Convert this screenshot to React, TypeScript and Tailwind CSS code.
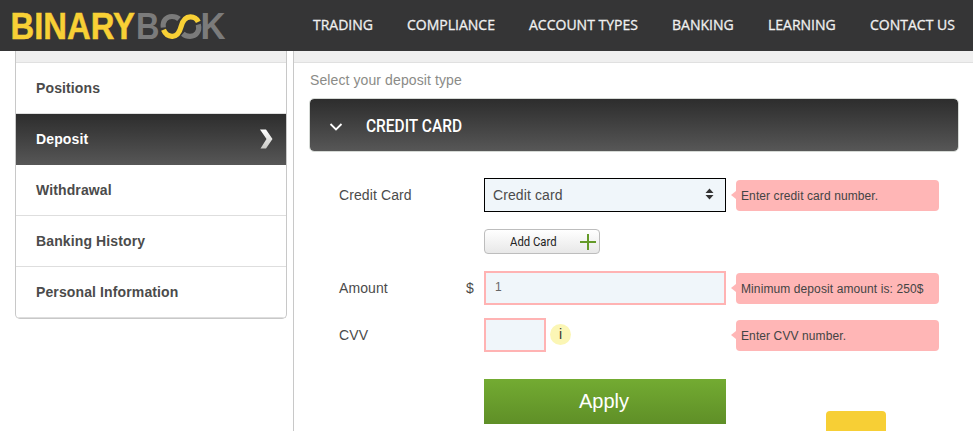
import React, { useState } from "react";
import clsx from "clsx";

type FieldRowProps = {
  label: string;
  prefix?: string;
  error?: string;
  children: React.ReactNode;
};

const navItems = [
  { label: "TRADING", width: "w-[60px]" },
  { label: "COMPLIANCE", width: "w-[88px]" },
  { label: "ACCOUNT TYPES", width: "w-[109px]" },
  { label: "BANKING", width: "w-[62px]" },
  { label: "LEARNING", width: "w-[68px]" },
  { label: "CONTACT US", width: "w-[86px]" },
];

const menuItems = [
  "Positions",
  "Deposit",
  "Withdrawal",
  "Banking History",
  "Personal Information",
];

const Logo: React.FC = () => (
  <svg
    width="227"
    height="51"
    viewBox="0 0 227 51"
    className="block overflow-visible"
    fontFamily="'Liberation Sans', sans-serif"
    fontWeight="bold"
    fontSize="36"
  >
    <text x="10.500" y="38.800" fill="#f8d035" stroke="#f8d035" strokeWidth="0.5" textLength="124.500" lengthAdjust="spacingAndGlyphs">
      BINARY
    </text>
    <text x="136" y="38.800" fill="#7b7b7b" textLength="23.500" lengthAdjust="spacingAndGlyphs">
      B
    </text>
    <text x="200.500" y="38.800" fill="#7b7b7b" textLength="25" lengthAdjust="spacingAndGlyphs">
      K
    </text>
    {/* Two interlocked rings that stand for the double O */}
    <g fill="none" strokeWidth="5.2">
      <path d="M163.300 27.500C162.300 20.500 166.500 16.500 172 16.500c3 0 5.200.8 7 2.500" stroke="#7b7b7b" />
      <path d="M198.300 24.500c1.800 7-2.300 11.900-8.300 11.900-3 0-5.300-.9-7.200-2.600" stroke="#7b7b7b" />
      <path d="M163.500 29.800C165.500 34.500 168.800 36.500 172.500 36.300c5.500-.3 7.200-4.500 8.500-9.500 1.400-5.500 3.800-9.800 9.500-9.900 3.600 0 6.200 1.500 7.800 5" stroke="#f8d035" />
    </g>
  </svg>
);

const ErrorTip: React.FC<{ text: string }> = ({ text }) => (
  <div className="relative ml-[10px] flex h-[31px] w-[203px] items-center rounded bg-[#ffb6b6] pt-[2px] pl-[5px] text-[12px] tracking-[0.1px] text-[#444]">
    <span className="absolute top-[11px] -left-[5px] border-y-[4px] border-r-[5px] border-y-transparent border-r-[#ffb6b6]" />
    {text}
  </div>
);

const FieldRow: React.FC<FieldRowProps> = ({
  label,
  prefix,
  error,
  children,
}) => (
  <div className="flex h-[34px] items-center">
    <label className="w-[127px] text-[14px] tracking-[0.1px]">{label}</label>
    <span className="w-[18px] text-[14px]">{prefix}</span>
    <div className="flex h-[34px] w-[242px] items-center">{children}</div>
    {error && <ErrorTip text={error} />}
  </div>
);

const App: React.FC = () => {
  const [activeItem, setActiveItem] = useState<string>("Deposit");
  const [amount, setAmount] = useState<string>("1");
  const [cvv, setCvv] = useState<string>("");

  return (
    <div className="relative h-[431px] w-[973px] overflow-hidden bg-white font-['Liberation_Sans',Arial,sans-serif] text-[#4b4b4b]">
      <header className="flex h-[51px] items-center bg-[#353536]">
        <Logo />
        <nav className="mb-[2px] ml-[86px] flex gap-[34px] font-['Open_Sans',sans-serif] text-[14px] leading-[20px] whitespace-nowrap text-[#f0f0f0] [-webkit-text-stroke:0.3px_#f0f0f0]">
          {navItems.map((item) => (
            <a key={item.label} className={item.width}>
              {item.label}
            </a>
          ))}
        </nav>
      </header>

      <div className="flex">
        <aside className="ml-[15px] h-[268px] w-[272px] overflow-hidden rounded-b-[5px] border-x border-b border-[#c8c8c8]">
          <div className="h-[12px] border-b border-[#e0e0e0] bg-[#efefef]" />
          {menuItems.map((item) => (
            <button
              key={item}
              onClick={() => setActiveItem(item)}
              className={clsx(
                "flex h-[51px] w-full items-center justify-between pr-[12px] pl-[20px] text-[14px] font-bold tracking-[0.12px]",
                item === activeItem
                  ? "bg-linear-to-b from-[#2d2d2d] to-[#575757] text-white"
                  : "border-b border-[#dedede]"
              )}
            >
              {item}
              {item === activeItem && (
                <svg width="14" height="20" viewBox="0 0 14 20" className="mb-[2px]">
                  <defs>
                    <linearGradient id="arrow" x1="0" y1="0" x2="0" y2="1">
                      <stop offset="0" stopColor="#fff" />
                      <stop offset="1" stopColor="#c9c9c5" />
                    </linearGradient>
                  </defs>
                  <path d="M0 0.500h6l6.500 9.500-6.500 9.500H0.500l6-9.500z" fill="url(#arrow)" />
                </svg>
              )}
            </button>
          ))}
        </aside>

        <main className="ml-[6px] h-[380px] w-[680px] border-l border-[#c8c8c8]">
          <div className="h-[12px] border-b border-[#e0e0e0] bg-[#efefef]" />
          <p className="mt-[7px] ml-[16px] text-[14px] leading-[20px] tracking-[0.1px] text-[#8b8b87]">
            Select your deposit type
          </p>
          <div className="mt-[8px] ml-[15px] flex h-[54px] w-[650px] items-center rounded-[5px] border border-[#d5d9d5] bg-linear-to-b from-[#2d2d2d] to-[#575757] bg-clip-padding">
            <svg width="14" height="10" viewBox="0 0 14 10" className="mt-[4px] ml-[19px]">
              <path d="M1.500 2l5.500 5.500L12.500 2" fill="none" stroke="#fff" strokeWidth="1.800" />
            </svg>
            <h2 className="ml-[23px] origin-left scale-x-[0.86] font-['Roboto',sans-serif] text-[18px] font-medium whitespace-nowrap text-white">
              CREDIT CARD
            </h2>
          </div>

          <form className="mt-[26px] ml-[45px]" onSubmit={(e) => e.preventDefault()}>
            <FieldRow label="Credit Card" error="Enter credit card number.">
              <div className="flex h-full w-full items-center justify-between border border-black bg-[#f0f6fa] pr-[11px] pl-[8px] text-[14px] tracking-[0.1px]">
                Credit card
                <svg width="9" height="12" viewBox="0 0 9 12" className="mb-[3px]" fill="#333">
                  <path d="M4.500 0.500L8.500 5h-8zM4.500 11.500L0.500 7h8z" />
                </svg>
              </div>
            </FieldRow>

            <button
              type="button"
              className="mt-[17px] ml-[145px] flex h-[25px] w-[116px] items-center rounded border border-[#bdbdbd] bg-linear-to-b from-white to-[#e8e8e8] pl-[25px] text-[#222]"
            >
              <span className="mb-[2px] w-[70px] text-left">
                <span className="inline-block origin-left scale-x-[0.87] font-['Roboto',sans-serif] text-[13px] leading-[18px] whitespace-nowrap">
                  Add Card
                </span>
              </span>
              <svg width="16" height="16" viewBox="0 0 16 16">
                <path d="M8 0v16M0 8h16" stroke="#649a28" strokeWidth="2" />
              </svg>
            </button>

            <div className="mt-[17px]">
              <FieldRow label="Amount" prefix="$" error="Minimum deposit amount is: 250$">
                <input
                  value={amount}
                  onChange={(e) => setAmount(e.target.value)}
                  className="h-full w-full border-2 border-[#ffb3b3] bg-[#f0f6fa] pb-[3px] pl-[9px] text-[12px] text-[#666]"
                />
              </FieldRow>
            </div>

            <div className="mt-[13px]">
              <FieldRow label="CVV" error="Enter CVV number.">
                <input
                  value={cvv}
                  onChange={(e) => setCvv(e.target.value)}
                  className="h-full w-[62px] border-2 border-[#ffb3b3] bg-[#f0f6fa] px-2 text-[12px]"
                />
                <span className="mb-[2px] ml-[4px] flex size-[21px] items-center justify-center rounded-full bg-[#fbf6b5] text-[14px] text-[#333]">
                  i
                </span>
              </FieldRow>
            </div>

            <button
              type="submit"
              className="mt-[27px] ml-[145px] flex h-[45px] w-[242px] items-center justify-center bg-linear-to-b from-[#73ab32] to-[#5f8f27] pr-[2px] pb-[2px] text-[20px] text-white"
            >
              Apply
            </button>
          </form>
        </main>
      </div>

      {/* Chat tab pinned to the bottom of the window */}
      <div className="absolute bottom-0 left-[826px] h-[20px] w-[60px] rounded-t bg-[#f7cf35]" />
    </div>
  );
};

export default App;
